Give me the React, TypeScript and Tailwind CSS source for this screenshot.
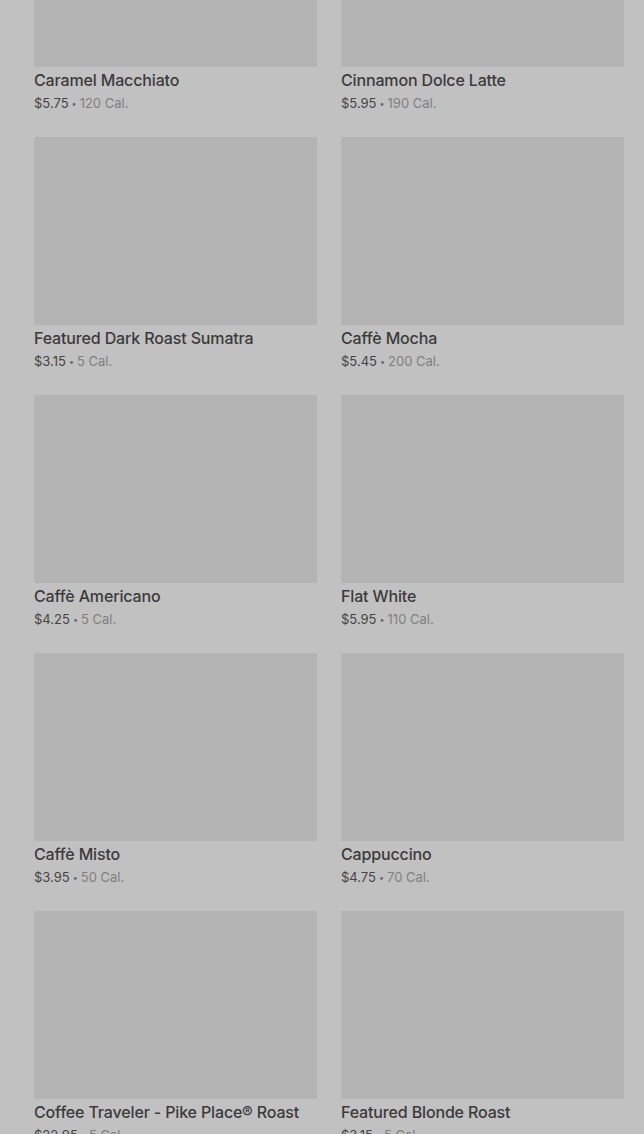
import React from "react";

const items = [
  { name: "Caramel Macchiato", price: "$5.75", cal: "120 Cal." },
  { name: "Cinnamon Dolce Latte", price: "$5.95", cal: "190 Cal." },
  { name: "Featured Dark Roast Sumatra", price: "$3.15", cal: "5 Cal." },
  { name: "Caffè Mocha", price: "$5.45", cal: "200 Cal." },
  { name: "Caffè Americano", price: "$4.25", cal: "5 Cal." },
  { name: "Flat White", price: "$5.95", cal: "110 Cal." },
  { name: "Caffè Misto", price: "$3.95", cal: "50 Cal." },
  { name: "Cappuccino", price: "$4.75", cal: "70 Cal." },
  { name: "Coffee Traveler - Pike Place® Roast", price: "$22.95", cal: "5 Cal." },
  { name: "Featured Blonde Roast", price: "$3.15", cal: "5 Cal." },
];

export default function App() {
  return (
    <div
      className="w-[644px] h-[1134px] overflow-hidden bg-[#c1c1c1]"
      style={{ fontFamily: "Inter, 'Open Sans', sans-serif" }}
    >
      <div className="grid grid-cols-2 gap-x-6 pl-[34px] pr-5 -mt-[121px]">
        {items.map((it) => (
          <div key={it.name} className="flex flex-col pb-[23px]">
            <div className="h-[188px] bg-[#b4b4b4]" />
            <div className="h-[25px] pt-px text-[16px] leading-6 font-medium text-[#3b3b3b] tracking-[-0.15px] whitespace-nowrap">
              {it.name}
            </div>
            <div className="h-[22px] overflow-visible text-[13px] leading-[22px] whitespace-nowrap">
              <span className="text-[#454545]">{it.price}</span>
              <span className="text-[#6a6a6a] text-[9px] leading-none px-[3px] align-[1px]">•</span>
              <span className="text-[#808080]">{it.cal}</span>
            </div>
          </div>
        ))}
      </div>
    </div>
  );
}
